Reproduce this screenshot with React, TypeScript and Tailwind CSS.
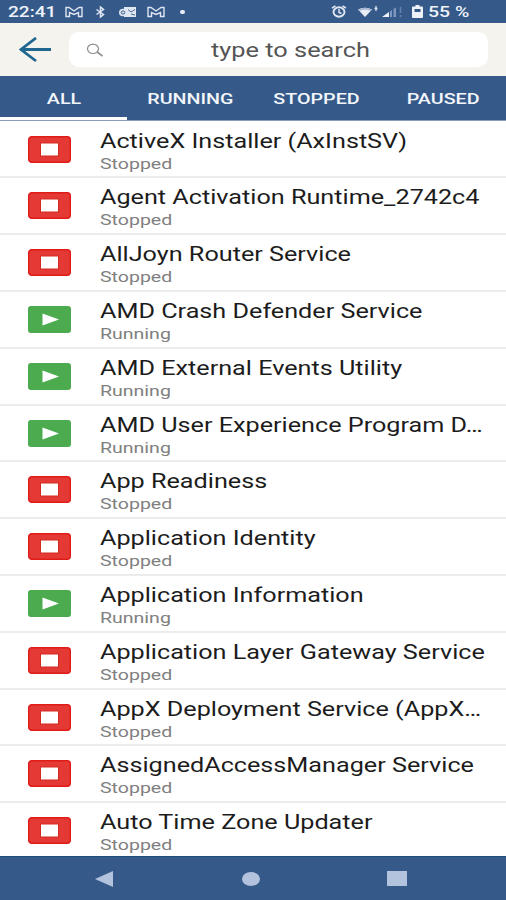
import type { ReactNode } from "react";
import clsx from "clsx";

type Status = "Running" | "Stopped";

interface Service {
  name: string;
  status: Status;
}

const services: Service[] = [
  { name: "ActiveX Installer (AxInstSV)", status: "Stopped" },
  { name: "Agent Activation Runtime_2742c4", status: "Stopped" },
  { name: "AllJoyn Router Service", status: "Stopped" },
  { name: "AMD Crash Defender Service", status: "Running" },
  { name: "AMD External Events Utility", status: "Running" },
  { name: "AMD User Experience Program D…", status: "Running" },
  { name: "App Readiness", status: "Stopped" },
  { name: "Application Identity", status: "Stopped" },
  { name: "Application Information", status: "Running" },
  { name: "Application Layer Gateway Service", status: "Stopped" },
  { name: "AppX Deployment Service (AppX…", status: "Stopped" },
  { name: "AssignedAccessManager Service", status: "Stopped" },
  { name: "Auto Time Zone Updater", status: "Stopped" },
];

const tabs = ["ALL", "RUNNING", "STOPPED", "PAUSED"];

// Wide variant of a text run
const Wide = ({
  className,
  children,
}: {
  className?: string;
  children: ReactNode;
}) => (
  <span className={clsx("inline-block whitespace-nowrap", className)}>
    {children}
  </span>
);

const MailIcon = () => (
  <svg className="h-3 w-[18px]" viewBox="0 0 18 12" fill="none">
    <path
      d="M1 1.500h3L9 5l5-3.500h3v9h-3.500V6.500L9 8.500 4.500 6.500v4H1z"
      stroke="#dfe6f2"
      strokeWidth="1.400"
    />
  </svg>
);

const StatusBar = () => (
  <div className="flex h-[23px] shrink-0 items-center bg-[#355a8a] pl-2 text-[#eef2f8]">
    <div className="w-[57px]">
      <Wide className="origin-left scale-x-[1.27] text-[15px] font-medium leading-[23px]">
        22:41
      </Wide>
    </div>
    <MailIcon />
    <svg className="ml-3 h-3 w-[11px]" viewBox="0 0 11 12" fill="none">
      <path
        d="M1.500 3.500 8.500 8.500 5.500 11V1l3 2.500-7 5"
        stroke="#dfe6f2"
        strokeWidth="1.500"
      />
    </svg>
    <svg className="ml-[13px] h-3 w-[18px]" viewBox="0 0 18 12">
      <path d="M5 1h12v10H5z" fill="#dfe6f2" />
      <ellipse cx="4" cy="6.500" rx="4" ry="3.800" fill="#dfe6f2" />
      <ellipse cx="4" cy="6.500" rx="1.800" ry="1.600" fill="none" stroke="#355a8a" />
      <path d="m9 3.500 3 2.500 4-2.500M12 8l4 1" fill="none" stroke="#355a8a" strokeWidth="0.900" />
    </svg>
    <div className="w-[10px]" />
    <MailIcon />
    <div className="ml-[15px] h-1 w-[5px] rounded-full bg-[#e8edf5]" />
    <svg className="ml-[146px] h-[13px] w-4" viewBox="0 0 16 13" fill="none">
      <ellipse cx="8" cy="7" rx="5.500" ry="4.700" stroke="#dfe6f2" strokeWidth="1.900" />
      <path d="M8 4v3.500l2.500 1M1 3l3.500-2M15 3l-3.500-2" stroke="#dfe6f2" strokeWidth="1.500" />
    </svg>
    <svg className="ml-[11px] h-3 w-[21px]" viewBox="0 0 21 12">
      <path d="M0 3.500Q7 0 14 3.500L7 11z" fill="#e8edf5" />
      <path d="M0 3.500Q7 0 14 3.500L12.500 5Q7 2.500 1.500 5z" fill="#a9b8d2" />
      <path d="M18 0v5M16.500 2.500h3" stroke="#dfe6f2" strokeWidth="1.300" />
    </svg>
    <svg className="ml-[3px] h-3 w-[20px]" viewBox="0 0 20 12">
      <path d="M0 11 7 6v5z" fill="#eef2f8" />
      <path d="M8 5.500 10 4v7H8zM11.500 3 14 1.500V11h-2.500z" fill="#7f98bf" />
      <path d="M18.500 1v6M18.500 9v2" stroke="#6583b0" strokeWidth="1.500" />
    </svg>
    <svg className="ml-[10px] h-[13px] w-[11px]" viewBox="0 0 11 13">
      <path d="M3.500 0h4v1.500H10q1 0 1 1V12q0 1-1 1H1q-1 0-1-1V2.500q0-1 1-1h2.500z" fill="#eef2f8" />
      <path d="M2.500 4h6v3h-6z" fill="#355a8a" />
    </svg>
    <Wide className="ml-[5px] origin-left translate-y-px scale-x-[1.300] text-[15px] font-medium leading-[23px]">
      55 %
    </Wide>
  </div>
);

const SearchBar = () => (
  <div className="flex h-[53px] shrink-0 items-center bg-[#f5f3ee] pl-[19px] pr-[18px]">
    <svg className="h-[26px] w-[33px]" viewBox="0 0 33 26" fill="none">
      <path d="M32 12.500H2M17 1 2 12.500 17 24" stroke="#1f6690" strokeWidth="2.800" />
    </svg>
    <div className="ml-[17px] flex h-[35px] flex-1 items-center rounded-[10px] bg-white pl-[17px]">
      <svg className="h-[14px] w-[18px]" viewBox="0 0 18 14" fill="none">
        <ellipse cx="7" cy="5.800" rx="5.500" ry="4.700" stroke="#8c8c8c" strokeWidth="1.200" />
        <path d="m11.200 9 5.300 4.200" stroke="#8c8c8c" strokeWidth="1.600" />
      </svg>
      <div className="ml-[107px] pt-[3px]">
        <Wide className="origin-left scale-x-[1.300] text-[19.500px] leading-[23px] text-[#555]">
          type to search
        </Wide>
      </div>
    </div>
  </div>
);

const TabBar = () => (
  <div className="grid h-[45px] shrink-0 grid-cols-4 border-b border-[#8b9bbd] bg-[#355a8a] text-[#f3f6fb]">
    {tabs.map((tab, i) => (
      <div
        key={tab}
        className={clsx(
          "flex items-center justify-center border-b-[3px] pt-1",
          i === 0 ? "border-white" : "border-transparent",
        )}
      >
        <Wide className="translate-x-[0.500px] scale-x-[1.270] text-[15.500px] font-medium leading-5">
          {tab}
        </Wide>
      </div>
    ))}
  </div>
);

const StatusIcon = ({ status }: { status: Status }) =>
  status === "Stopped" ? (
    <svg className="h-[27px] w-[43px]" viewBox="0 0 43 27">
      <rect x="0.700" y="0.700" width="41.600" height="25.600" rx="3" fill="#e53935" stroke="#df1c18" strokeWidth="1.400" />
      <rect x="12.500" y="7" width="18" height="13" fill="#fff" stroke="#d32a20" />
    </svg>
  ) : (
    <svg className="h-[27px] w-[43px]" viewBox="0 0 43 27">
      <rect width="43" height="27" rx="3" fill="#4caa4f" />
      <path d="M14.500 7.500 31 13.500 14.500 19.500z" fill="#fff" />
    </svg>
  );

const ServiceRow = ({ name, status }: Service) => (
  <div className="flex h-[56.800px] shrink-0 border-b-2 border-[#ececec] pl-7">
    <div className="pt-[14px]">
      <StatusIcon status={status} />
    </div>
    <div className="ml-[29px] flex flex-col items-start pt-2">
      <Wide className="origin-left scale-x-[1.292] text-[19.500px] leading-6 text-[#1c1c1c]">
        {name}
      </Wide>
      <Wide className="origin-left scale-x-[1.260] text-[15.500px] leading-[21px] text-[#808080]">
        {status}
      </Wide>
    </div>
  </div>
);

const NavBar = () => (
  <div className="flex h-11 shrink-0 items-center border-t border-[#1f4d80] bg-[#355a8a] pl-[95px]">
    <svg className="h-4 w-[18px]" viewBox="0 0 18 16">
      <path d="M0 8 18 0v16z" fill="#b4c3dd" />
    </svg>
    <div className="ml-[129px] h-[14px] w-[18px] rounded-[50%] bg-[#b4c3dd]" />
    <div className="ml-[127px] h-[15px] w-5 bg-[#b4c3dd]" />
  </div>
);

const App = () => {
  return (
    <div className="flex h-[900px] w-[506px] flex-col overflow-hidden bg-white font-['Roboto',sans-serif]">
      <StatusBar />
      <SearchBar />
      <TabBar />
      <div className="flex min-h-0 flex-1 flex-col overflow-hidden pt-[0.700px]">
        {services.map((service) => (
          <ServiceRow key={service.name} {...service} />
        ))}
      </div>
      <NavBar />
    </div>
  );
};

export default App;
